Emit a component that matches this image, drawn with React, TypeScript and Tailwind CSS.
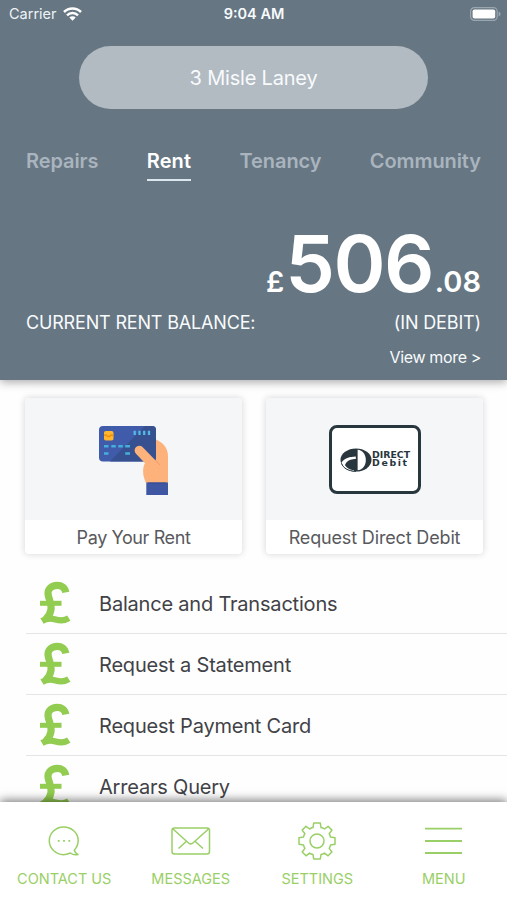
import type { ReactNode } from "react";

const tabs = [
  { label: "Repairs", active: false },
  { label: "Rent", active: true },
  { label: "Tenancy", active: false },
  { label: "Community", active: false },
];

const rows = ["Balance and Transactions", "Request a Statement", "Request Payment Card", "Arrears Query"];

function WifiIcon() {
  return (
    <svg width="19" height="14" viewBox="0 0 19 14" fill="none" stroke="#fff" strokeWidth="2.5">
      <path d="M1 5 C5.7 .3 13.3 .3 18 5" />
      <path d="M4 8.3 C7 5.3 12 5.3 15 8.3" />
      <path d="M6.3 10.4 C8 8.8 11 8.8 12.7 10.4 L9.5 13.7Z" fill="#fff" stroke="none" />
    </svg>
  );
}

function BatteryIcon() {
  return (
    <svg width="31" height="14" viewBox="0 0 31 14" fill="none">
      <rect x=".6" y=".6" width="26.6" height="12.8" rx="3.8" stroke="#9ba7b0" strokeWidth="1.2" />
      <rect x="2.6" y="2.5" width="22.6" height="9" rx="1.8" fill="#fff" />
      <path d="M28.6 4.6 Q30.6 5.4 30.6 7 Q30.6 8.6 28.6 9.4Z" fill="#9ba7b0" />
    </svg>
  );
}

function CardInHand() {
  return (
    <svg width="70" height="70" viewBox="0 0 70 70" className="mt-[4px] shrink-0">
      <path d="M56 13 C63 16 69 21 69 30 V57 H47 C45 52 43 47 45 41 L48 36Z" fill="#fdb17b" />
      <rect x="0" y="0" width="57" height="35.5" rx="4" fill="#3f5ba9" />
      <path d="M11 35.5 L46 0 H53 Q57 0 57 4 V31.5 Q57 35.5 53 35.5Z" fill="#37508f" />
      <rect x="5" y="5" width="9.5" height="9.5" rx="1.8" fill="#fdb62f" />
      <path d="M5 9.2 H8 M11 9.2 H14.5 M7.8 10.3 H11.5" stroke="#ee8700" strokeWidth="1.3" />
      <path d="M5 20.3 H9.5 M12.3 20.3 H16.8 M19.3 20.3 H23.8 M26.2 20.3 H31 M5 27.5 H9.5 M26.2 27.5 H31" stroke="#45aeda" strokeWidth="2.4" />
      <path d="M35.7 4.8 V9 M40.5 4.8 V9 M45.2 4.8 V9 M50 4.8 V9" stroke="#53b9e5" strokeWidth="2.3" />
      <path d="M36.8 27.5 C33.5 23.5 38 17.8 43 20.5 L61 39 L59 51 L46 49 C43.5 44 44.5 39.5 46 37.2Z" fill="#fdb17b" />
      <path d="M56.5 34 L61 39" stroke="#f39c6c" strokeWidth="1" />
      <rect x="47.3" y="56.5" width="21.7" height="12.5" fill="#3f57a3" />
      <path d="M49 57 H67" stroke="#324b91" />
    </svg>
  );
}

function DirectDebitLogo() {
  return (
    <div className="ml-px mt-px flex h-[69px] w-[92px] items-center rounded-[8px] border-[3px] border-[#28363e] bg-white pl-[8px]">
      <svg width="32" height="24" viewBox="0 0 32 24" className="shrink-0">
        <ellipse cx="16" cy="12" rx="15.5" ry="11.5" fill="#28363e" />
        <path d="M17.6 1.7 C22.8 2 25.8 6.5 25.8 12 C25.8 17.5 22.8 22 17.6 22.3Z" fill="#fff" />
        <path d="M1.6 14.3 C4.5 10 9.5 8.6 15.8 8.4 V11 C9.5 11.2 6 13.5 5 17.2 C7 20.5 10 21.8 14 22.3 V23.2 C7 22.6 2 19 1.6 14.3Z" fill="#fff" />
        <path d="M15.8 11 V22.2 C12 22 10 19.5 10 16.5 C10 13.5 12 11.4 15.8 11Z" fill="#28363e" />
        <path d="M1.6 15.5 C3.2 20 8 23.2 16 23.3" stroke="#28363e" strokeWidth="1" fill="none" />
      </svg>
      <div className="w-[33px] origin-left scale-x-[1.17] font-['DejaVu_Sans'] font-bold leading-[8px] text-[#28363e]">
        <div className="whitespace-nowrap text-[8px]">DIRECT</div>
        <div className="whitespace-nowrap text-[8px] tracking-[1.4px]">Debit</div>
      </div>
    </div>
  );
}

function PoundIcon() {
  return (
    <svg width="31" height="44" viewBox="0 0 31 44" fill="none" stroke="#92cc51" strokeWidth="7.2">
      <path d="M25.8 11.3 C24.8 6 21 4.3 17.5 4.3 C10 4.3 6.8 9.5 8.4 15 C9.6 19.5 11.6 24 11 28.5 C10.4 32.5 8.8 35.5 5.5 38.5" />
      <path d="M0 22.3 H21.5" strokeWidth="5" />
      <path d="M2 40 C7 36.9 11.5 37.3 15.5 38.5 C20 39.8 24 40.3 28.8 37.2" strokeWidth="6.2" />
    </svg>
  );
}

function ActionCard({ label, tracking, children }: { label: string; tracking: string; children: ReactNode }) {
  return (
    <div className="flex h-[156px] w-[217px] flex-col overflow-hidden rounded-[4px] bg-white shadow-[0_0_6px_1px_rgba(0,0,0,0.13)]">
      <div className="flex h-[122px] shrink-0 items-center justify-center bg-[#f4f6f8]">{children}</div>
      <div className={`text-center text-[18px] leading-[35px] text-[#58595d] ${tracking}`}>{label}</div>
    </div>
  );
}

function ChatIcon() {
  return (
    <svg width="32" height="30" viewBox="0 0 32 30" fill="none" stroke="#99cf66" strokeWidth="1.5">
      <path d="M26.3 24.2 C31.5 18.5 31.5 10 26 5 C20 -.4 11 -.3 5.5 5 C-.5 11 .2 19.5 5.8 24.8 C10.5 29 17 29.4 22.3 27 C24.5 28.8 27 29.2 30 28.6 C28.2 27.6 26.8 26.2 26.3 24.2Z" strokeLinejoin="round" />
      <path d="M9.8 14.8 H11.6 M15.1 14.8 H16.9 M20.4 14.8 H22.2" strokeWidth="1.8" />
    </svg>
  );
}

function EnvelopeIcon() {
  return (
    <svg width="40" height="28" viewBox="0 0 40 28" fill="none" stroke="#99cf66" strokeWidth="1.5">
      <rect x="1" y="1" width="37.5" height="26" rx="2.5" />
      <path d="M2 2 L17.2 15.8 Q19.7 18 22.2 15.8 L37.5 2 M15.5 14.2 L7.5 21.5 M24 14.2 L32 21.5" />
    </svg>
  );
}

function GearIcon() {
  return (
    <svg width="38" height="38" viewBox="0 0 38 38" fill="none" stroke="#99cf66" strokeWidth="1.5" strokeLinejoin="round">
      <path d="M15.7 1 H22.3 L23 5.6 Q25 6 26.5 7 L30.1 4.3 L33.9 8.1 L31.2 11.7 Q32.2 13.3 32.5 15.1 L37 15.7 V22.3 L32.5 23 Q32.2 24.8 31.2 26.4 L33.9 30 L30.1 33.8 L26.5 31.1 Q25 32.1 23 32.5 L22.3 37 H15.7 L15 32.5 Q13.2 32.1 11.6 31.1 L8 33.8 L4.2 30 L6.9 26.4 Q5.9 24.8 5.5 23 L1 22.3 V15.7 L5.5 15.1 Q5.9 13.3 6.9 11.7 L4.2 8.1 L8 4.3 L11.6 7 Q13.2 6 15 5.6Z" />
      <circle cx="19" cy="19" r="7" />
    </svg>
  );
}

function MenuIcon() {
  return (
    <svg width="37" height="28" viewBox="0 0 37 28" stroke="#99cf66" strokeWidth="1.8">
      <path d="M0 1.7 H37 M0 14 H37 M0 26 H37" />
    </svg>
  );
}

function NavItem({ label, children }: { label: string; children: ReactNode }) {
  return (
    <div className="flex flex-1 flex-col items-center pt-[18px]">
      <div className="flex h-[41px] items-center justify-center">{children}</div>
      <div className="mt-[8px] whitespace-nowrap text-[14.5px] leading-[20px] text-[#99cf66]">{label}</div>
    </div>
  );
}

export default function App() {
  return (
    <div className="flex h-[900px] w-[507px] flex-col overflow-hidden bg-[#fefefe] font-['Inter',sans-serif]">
      <header className="z-10 h-[380px] shrink-0 bg-[#667682] text-[#f8fbfd] shadow-[0_2px_9px_rgba(0,0,0,0.35)]">
        <div className="grid h-[28px] grid-cols-3 items-center pl-[9px] pr-[6px]">
          <div className="flex items-center gap-[6px]">
            <span className="text-[14.5px] text-[#eef3f6]">Carrier</span>
            <WifiIcon />
          </div>
          <div className="-ml-[5px] -mr-[3px] text-center text-[14.5px] font-semibold">9:04 AM</div>
          <div className="flex justify-end"><BatteryIcon /></div>
        </div>
        <div className="mx-auto mt-[18px] h-[63px] w-[349px] rounded-full bg-[#b2bac2] text-center text-[20px] leading-[64px] tracking-[-0.2px]">
          3 Misle Laney
        </div>
        <nav className="mt-[38px] flex justify-between px-[26px]">
          {tabs.map((tab) => (
            <div
              key={tab.label}
              className={
                tab.active
                  ? "h-[34px] border-b-2 border-[#dce6ee] text-[20px] font-semibold leading-[28px] tracking-[0.15px] text-white"
                  : "h-[34px] text-[20px] font-semibold leading-[28px] tracking-[-0.08px] text-[#a9b4be]"
              }
            >
              {tab.label}
            </div>
          ))}
        </nav>
        <div className="mt-[40px] flex h-[84px] items-baseline justify-end pr-[26px] font-semibold leading-[84px] text-white">
          <span className="text-[29px]">£</span>
          <span className="ml-[1px] text-[79px] tracking-[-1.6px]">506</span>
          <span className="ml-[2px] text-[29px]">.08</span>
        </div>
        <div className="mt-[5px] flex justify-between px-[26px] text-[18px] leading-[26px]">
          <span className="tracking-[-0.17px]">CURRENT RENT BALANCE:</span>
          <span className="tracking-[-0.15px]">(IN DEBIT)</span>
        </div>
        <div className="mt-[10px] pr-[26px] text-right text-[16px] leading-[22px] tracking-[-0.35px]">View more &gt;</div>
      </header>

      <main className="flex h-[422px] shrink-0 flex-col overflow-hidden">
        <div className="flex gap-[24px] pl-[25px] pt-[18px]">
          <ActionCard label="Pay Your Rent" tracking="tracking-[-0.4px]">
            <CardInHand />
          </ActionCard>
          <ActionCard label="Request Direct Debit" tracking="tracking-[-0.15px]">
            <DirectDebitLogo />
          </ActionCard>
        </div>
        <div className="mt-[19px] pl-[26px]">
          {rows.map((row) => (
            <div key={row} className="flex h-[61px] items-center border-b border-[#e4e5e7] pl-[14px]">
              <PoundIcon />
              <span className="ml-[28px] pt-[1px] text-[20px] tracking-[-0.2px] text-[#414247]">{row}</span>
            </div>
          ))}
        </div>
      </main>

      <footer className="z-10 flex h-[98px] shrink-0 bg-white pl-[1px] shadow-[0_-2px_9px_rgba(0,0,0,0.5)]">
        <NavItem label="CONTACT US"><ChatIcon /></NavItem>
        <NavItem label="MESSAGES"><EnvelopeIcon /></NavItem>
        <NavItem label="SETTINGS"><GearIcon /></NavItem>
        <NavItem label="MENU"><MenuIcon /></NavItem>
      </footer>
    </div>
  );
}
